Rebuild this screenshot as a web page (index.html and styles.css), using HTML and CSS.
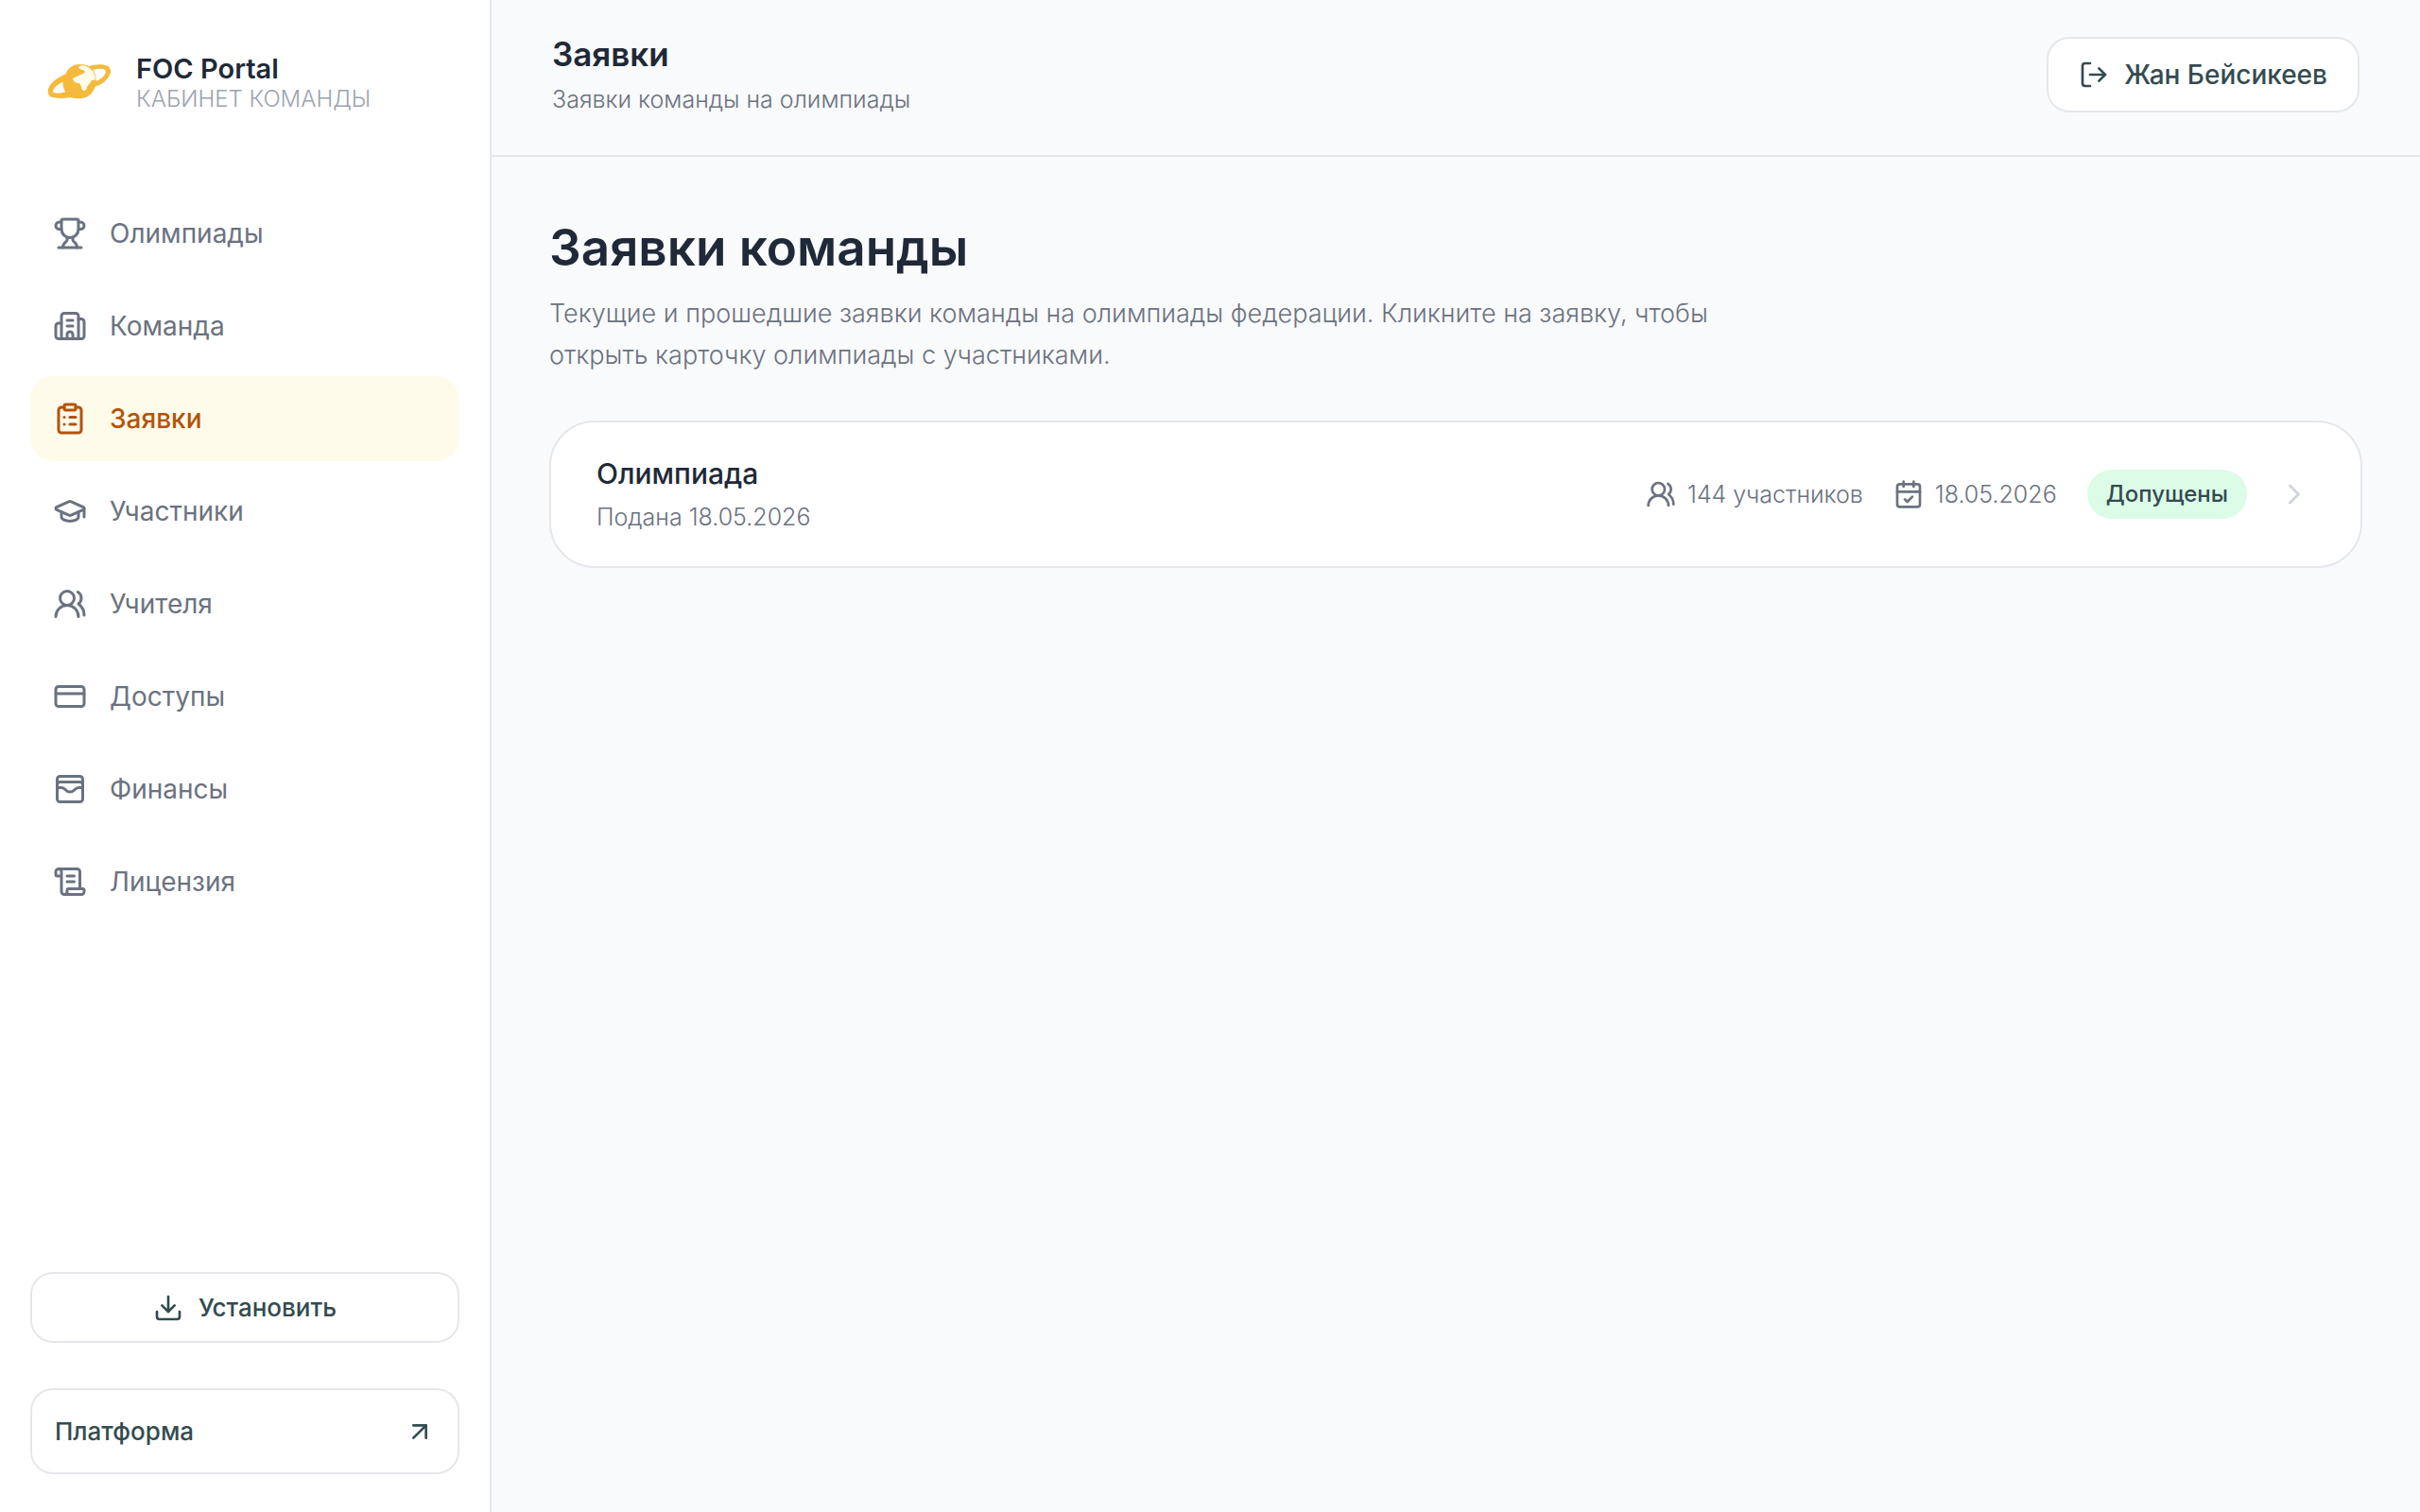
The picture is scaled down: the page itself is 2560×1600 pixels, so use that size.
FILE: index.html
```html
<!DOCTYPE html>
<html lang="ru">
<head>
<meta charset="utf-8">
<meta name="viewport" content="width=device-width, initial-scale=1">
<title>Заявки — FOC Portal</title>
<link rel="stylesheet" href="styles.css">
</head>
<body>
<div class="app">
  <aside class="sidebar">
    <div class="brand">
      <svg class="brand-mark" viewBox="152 144 194 108" aria-hidden="true">
        <path fill="#f5ba3c" fill-rule="evenodd" d="M154 228C154 208 180 188 208 176C214 158 230 147 250 147C262 147 270 149 277 152C295 147 320 144 335 152C347 160 345 176 335 188C325 202 312 210 297 214C290 236 272 250 250 250C235 250 230 248 220 247C200 250 180 250 165 246C156 242 154 236 154 228ZM170 226C169 229 169 231 173 233C182 236 196 233 207 230C202 222 198 212 199 200C186 206 174 214 170 226ZM290 164C297 174 300 184 299 197C307 194 315 190 322 182C328 176 331 168 325 163C318 159 304 160 290 164Z"/>
        <path fill="#fffbea" d="M247 153C258 147 272 151 282 160C292 168 298 180 297 194L286 195C282 205 272 210 270 222C265 228 258 228 256 220C253 212 254 206 246 204C238 203 230 198 229 190C234 184 246 184 252 178C258 175 266 174 265 168C262 162 252 164 247 158Z"/>
      </svg>
      <div class="brand-text">
        <span class="brand-name">FOC Portal</span>
        <span class="brand-sub">КАБИНЕТ КОМАНДЫ</span>
      </div>
    </div>
    <nav class="nav" aria-label="Основное меню">
      <a class="nav-link" href="#olympiads">
        <svg class="icon" viewBox="0 0 24 24" aria-hidden="true"><path d="M10 14.66v1.626a2 2 0 0 1-.976 1.696A5 5 0 0 0 7 21.978"/><path d="M14 14.66v1.626a2 2 0 0 0 .976 1.696A5 5 0 0 1 17 21.978"/><path d="M18 9h1.5a1 1 0 0 0 0-5H18"/><path d="M4 22h16"/><path d="M6 9a6 6 0 0 0 12 0V3a1 1 0 0 0-1-1H7a1 1 0 0 0-1 1z"/><path d="M6 9H4.5a1 1 0 0 1 0-5H6"/></svg>
        Олимпиады
      </a>
      <a class="nav-link" href="#team">
        <svg class="icon" viewBox="0 0 24 24" aria-hidden="true"><path d="M10 12h4"/><path d="M10 8h4"/><path d="M14 21v-3a2 2 0 0 0-4 0v3"/><path d="M6 10H4a2 2 0 0 0-2 2v7a2 2 0 0 0 2 2h16a2 2 0 0 0 2-2V9a2 2 0 0 0-2-2h-2"/><path d="M6 21V5a2 2 0 0 1 2-2h8a2 2 0 0 1 2 2v16"/></svg>
        Команда
      </a>
      <a class="nav-link is-active" href="#applications" aria-current="page">
        <svg class="icon" viewBox="0 0 24 24" aria-hidden="true"><rect width="8" height="4" x="8" y="2" rx="1"/><path d="M16 4h2a2 2 0 0 1 2 2v14a2 2 0 0 1-2 2H6a2 2 0 0 1-2-2V6a2 2 0 0 1 2-2h2"/><path d="M12 11h4"/><path d="M12 16h4"/><path d="M8 11h.01"/><path d="M8 16h.01"/></svg>
        Заявки
      </a>
      <a class="nav-link" href="#participants">
        <svg class="icon" viewBox="0 0 24 24" aria-hidden="true"><path d="M21.42 10.922a1 1 0 0 0-.019-1.838L12.83 5.18a2 2 0 0 0-1.66 0L2.6 9.08a1 1 0 0 0 0 1.832l8.57 3.908a2 2 0 0 0 1.66 0z"/><path d="M22 10v6"/><path d="M6 12.5V16a6 3 0 0 0 12 0v-3.5"/></svg>
        Участники
      </a>
      <a class="nav-link" href="#teachers">
        <svg class="icon" viewBox="0 0 24 24" aria-hidden="true"><path d="M18 21a8 8 0 0 0-16 0"/><circle cx="10" cy="8" r="5"/><path d="M22 20c0-3.37-2-6.5-4-8a5 5 0 0 0-.45-8.3"/></svg>
        Учителя
      </a>
      <a class="nav-link" href="#access">
        <svg class="icon" viewBox="0 0 24 24" aria-hidden="true"><rect width="20" height="14" x="2" y="5" rx="2"/><path d="M2 10h20"/></svg>
        Доступы
      </a>
      <a class="nav-link" href="#finance">
        <svg class="icon" viewBox="0 0 24 24" aria-hidden="true"><rect width="18" height="18" x="3" y="3" rx="2"/><path d="M3 9a2 2 0 0 1 2-2h14a2 2 0 0 1 2 2"/><path d="M3 11h3c.8 0 1.6.3 2.1.9l1.1.9c1.6 1.6 4.1 1.6 5.7 0l1.1-.9c.5-.5 1.3-.9 2.1-.9H21"/></svg>
        Финансы
      </a>
      <a class="nav-link" href="#license">
        <svg class="icon" viewBox="0 0 24 24" aria-hidden="true"><path d="M15 12h-5"/><path d="M15 8h-5"/><path d="M19 17V5a2 2 0 0 0-2-2H4"/><path d="M8 21h12a2 2 0 0 0 2-2v-1a1 1 0 0 0-1-1H11a1 1 0 0 0-1 1v1a2 2 0 1 1-4 0V5a2 2 0 1 0-4 0v2a1 1 0 0 0 1 1h3"/></svg>
        Лицензия
      </a>
    </nav>
    <div class="sidebar-foot">
      <button class="btn install" type="button">
        <svg class="icon icon-sm" viewBox="0 0 24 24" aria-hidden="true"><path d="M12 15V3"/><path d="M21 15v4a2 2 0 0 1-2 2H5a2 2 0 0 1-2-2v-4"/><path d="m7 10 5 5 5-5"/></svg>
        Установить
      </button>
      <a class="btn platform" href="#platform">
        Платформа
        <svg class="icon icon-sm" viewBox="0 0 24 24" aria-hidden="true"><path d="M7 7h10v10"/><path d="M7 17 17 7"/></svg>
      </a>
    </div>
  </aside>
  <div class="page">
    <header class="topbar">
      <div class="topbar-text">
        <h1 class="topbar-title">Заявки</h1>
        <p class="topbar-sub">Заявки команды на олимпиады</p>
      </div>
      <button class="btn user" type="button">
        <svg class="icon icon-sm" viewBox="0 0 24 24" aria-hidden="true"><path d="m16 17 5-5-5-5"/><path d="M21 12H9"/><path d="M9 21H5a2 2 0 0 1-2-2V5a2 2 0 0 1 2-2h4"/></svg>
        Жан Бейсикеев
      </button>
    </header>
    <main class="content">
      <h2 class="heading">Заявки команды</h2>
      <p class="lead">Текущие и прошедшие заявки команды на олимпиады федерации. Кликните на заявку, чтобы открыть карточку олимпиады с участниками.</p>
      <a class="card" href="#application">
        <div class="card-main">
          <h3 class="card-title">Олимпиада</h3>
          <p class="card-sub">Подана 18.05.2026</p>
        </div>
        <div class="card-meta">
          <span class="meta">
            <svg class="icon icon-sm" viewBox="0 0 24 24" aria-hidden="true"><path d="M18 21a8 8 0 0 0-16 0"/><circle cx="10" cy="8" r="5"/><path d="M22 20c0-3.37-2-6.5-4-8a5 5 0 0 0-.45-8.3"/></svg>
            144 участников
          </span>
          <span class="meta">
            <svg class="icon icon-sm" viewBox="0 0 24 24" aria-hidden="true"><path d="M8 2v4"/><path d="M16 2v4"/><rect width="18" height="18" x="3" y="4" rx="2"/><path d="M3 10h18"/><path d="m9 16 2 2 4-4"/></svg>
            18.05.2026
          </span>
          <span class="badge">Допущены</span>
          <svg class="icon chevron" viewBox="0 0 24 24" aria-hidden="true"><path d="m9 18 6-6-6-6"/></svg>
        </div>
      </a>
    </main>
  </div>
</div>
</body>
</html>
```
FILE: styles.css
```css
* { box-sizing: border-box; }

body {
  margin: 0;
  background: #f9fafc;
  color: #1f2937;
  font-family: Inter, "Noto Sans", sans-serif;
  font-size: 28px;
  line-height: 40px;
}

h1, h2, h3, p { margin: 0; }
a { color: inherit; text-decoration: none; }

.app {
  display: grid;
  grid-template-columns: 520px 1fr;
  min-height: 100vh;
}

.icon {
  flex: none;
  width: 36px;
  height: 36px;
  fill: none;
  stroke: currentColor;
  stroke-width: 2;
  stroke-linecap: round;
  stroke-linejoin: round;
}
.icon-sm { width: 32px; height: 32px; }

.sidebar {
  display: flex;
  flex-direction: column;
  padding: 40px 32px;
  background: #fff;
  border-right: 2px solid #e5e7eb;
}

.brand {
  display: flex;
  align-items: flex-start;
  gap: 26px;
  padding: 17px 18px;
  margin-bottom: 64px;
}
.brand-mark { width: 68px; height: 38px; margin-top: 10px; }
.brand-text { display: flex; flex-direction: column; }
.brand-name { font-size: 29px; font-weight: 600; line-height: 32px; }
.brand-sub { font-size: 24px; font-weight: 300; line-height: 32px; color: #9ca3af; }

.nav { display: flex; flex-direction: column; gap: 8px; }
.nav-link {
  display: flex;
  align-items: center;
  gap: 24px;
  height: 90px;
  padding: 0 24px;
  border-radius: 24px;
  color: #6b7280;
}
.nav-link.is-active {
  background: #fffbeb;
  color: #b45309;
  font-weight: 500;
}

.sidebar-foot {
  display: flex;
  flex-direction: column;
  gap: 48px;
  margin-top: auto;
}

.btn {
  display: flex;
  align-items: center;
  border: 2px solid #e5e7eb;
  border-radius: 24px;
  background: #fff;
  color: #334b50;
  font-family: inherit;
  font-size: 26px;
  font-weight: 500;
  line-height: 40px;
}
.install { justify-content: center; gap: 16px; height: 75px; }
.platform { justify-content: space-between; height: 91px; padding: 0 24px; }
.user { gap: 16px; height: 80px; padding: 0 32px; font-size: 28px; }

.topbar {
  display: flex;
  align-items: flex-start;
  justify-content: space-between;
  height: 166px;
  padding: 39px 64px 0;
  border-bottom: 2px solid #e5e7eb;
}
.topbar-title { font-size: 35px; font-weight: 600; line-height: 36px; }
.topbar-sub { margin-top: 10px; font-size: 25px; font-weight: 300; color: #6b7280; }

.content { padding: 64px 61px; }
.heading { font-size: 53px; font-weight: 600; line-height: 64px; }
.lead {
  max-width: 1280px;
  margin-top: 16px;
  font-size: 27px;
  font-weight: 300;
  line-height: 44px;
  color: #6b7280;
}

.card {
  display: flex;
  align-items: center;
  justify-content: space-between;
  height: 156px;
  margin-top: 47px;
  padding: 0 52px 0 48px;
  border: 2px solid #e5e7eb;
  border-radius: 48px;
  background: #fff;
}
.card-title { font-size: 30px; font-weight: 500; line-height: 44px; }
.card-sub { margin-top: 4px; font-size: 25px; font-weight: 300; color: #6b7280; }
.card-meta { display: flex; align-items: center; gap: 32px; color: #6b7280; }
.meta { display: flex; align-items: center; gap: 12px; font-size: 25px; font-weight: 300; }
.badge {
  padding: 6px 20px;
  border-radius: 26px;
  background: #dcfce7;
  color: #334b50;
  font-size: 24px;
  font-weight: 500;
}
.chevron { color: #d1d5db; }
```
